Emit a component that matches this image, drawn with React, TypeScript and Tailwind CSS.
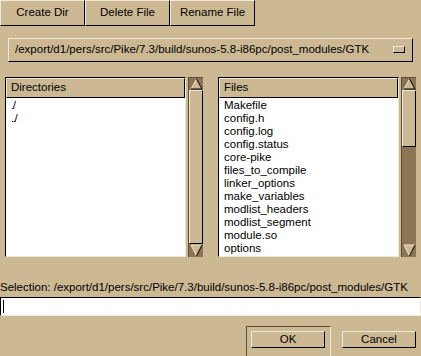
import React from 'react';

const dirs = ['./', '../'];

const files = [
  'Makefile',
  'config.h',
  'config.log',
  'config.status',
  'core-pike',
  'files_to_compile',
  'linker_options',
  'make_variables',
  'modlist_headers',
  'modlist_segment',
  'module.so',
  'options',
];

const path = '/export/d1/pers/src/Pike/7.3/build/sunos-5.8-i86pc/post_modules/GTK';

const ArrowUp = () => (
  <svg width="15" height="12" viewBox="0 0 15 12" className="block">
    <polygon points="7.5,1 2,11 13,11" fill="#ccb994" />
    <line x1="7.5" y1="1" x2="2" y2="11" stroke="#f1e8d6" strokeWidth="1" />
    <line x1="7.5" y1="1" x2="13" y2="11" stroke="#000" strokeWidth="1" />
    <line x1="2" y1="11" x2="13" y2="11" stroke="#000" strokeWidth="1" />
  </svg>
);

const ArrowDown = () => (
  <svg width="15" height="13" viewBox="0 0 15 13" className="block">
    <polygon points="2,1 13,1 7.5,12" fill="#ccb994" />
    <line x1="2" y1="1" x2="13" y2="1" stroke="#f1e8d6" strokeWidth="1" />
    <line x1="2" y1="1" x2="7.5" y2="12" stroke="#f1e8d6" strokeWidth="1" />
    <line x1="13" y1="1" x2="7.5" y2="12" stroke="#000" strokeWidth="1" />
  </svg>
);

const Scrollbar = ({ sliderHeight }: { sliderHeight: number }) => (
  <div className="w-[15px] h-full bg-[#8c7554] border-t border-l border-[#5e4c35] flex flex-col">
    <ArrowUp />
    <div
      className="w-[14px] bg-[#ccb994] border-t border-l border-t-[#f1e8d6] border-l-[#f1e8d6] border-r border-b border-r-black border-b-black"
      style={{ height: sliderHeight }}
    />
    <div className="flex-1" />
    <ArrowDown />
  </div>
);

const ListPane = ({ title, items, leading }: { title: string; items: string[]; leading?: boolean }) => (
  <div className="w-[181px] h-full border-t border-l border-black border-r border-b border-r-[#f1e8d6] border-b-[#f1e8d6] flex flex-col">
    <div className="h-[20px] bg-[#ccb994] border-t border-l border-t-[#f1e8d6] border-l-[#f1e8d6] border-r border-b border-r-black border-b-black flex items-center pl-[4px]">
      {title}
    </div>
    <div className="flex-1 bg-white pl-[5px] pt-[1px]">
      {items.map((item) => (
        <div key={item} className={`h-[13px] leading-[13px] ${leading ? 'tracking-[-1.5px]' : ''}`}>
          {item}
        </div>
      ))}
    </div>
  </div>
);

const ToolButton = ({ label }: { label: string }) => (
  <div className="w-[85px] h-[26px] border-t border-l border-t-[#f1e8d6] border-l-[#f1e8d6] border-r border-b border-r-black border-b-black flex items-center justify-center">
    {label}
  </div>
);

export default function App() {
  return (
    <div
      className="w-[421px] h-[356px] bg-[#ccb994] overflow-hidden text-[11.5px] text-black flex flex-col"
      style={{ fontFamily: '"Liberation Sans", Arial, sans-serif' }}
    >
      <div className="flex">
        <ToolButton label="Create Dir" />
        <ToolButton label="Delete File" />
        <ToolButton label="Rename File" />
      </div>

      <div className="mt-[12px] ml-[8px] w-[405px] h-[24px] border-t border-l border-t-[#f1e8d6] border-l-[#f1e8d6] border-r border-b border-r-black border-b-black flex items-center pl-[6px] pr-[7px]">
        <span className="flex-1 whitespace-nowrap">{path}</span>
        <div className="w-[12px] h-[7px] border-t border-l border-t-[#f1e8d6] border-l-[#f1e8d6] border-r border-b border-r-black border-b-black" />
      </div>

      <div className="mt-[15px] h-[181px] pl-[5px] flex">
        <ListPane title="Directories" items={dirs} leading />
        <div className="ml-[2px]">
          <Scrollbar sliderHeight={154} />
        </div>
        <div className="ml-[15px]">
          <ListPane title="Files" items={files} />
        </div>
        <div className="ml-[2px]">
          <Scrollbar sliderHeight={57} />
        </div>
      </div>

      <div className="mt-[23px] h-[14px] leading-[14px] whitespace-nowrap">Selection: {path}</div>

      <div className="mt-[3px] h-[19px] bg-white border-t border-l border-black border-r border-b border-r-[#f1e8d6] border-b-[#f1e8d6] flex items-center pl-[2px]">
        <div className="w-[1px] h-[13px] bg-black" />
      </div>

      <div className="mt-[10px] flex">
        <div className="ml-[246px] w-[85px] h-[30px] border-t border-l border-[#5e4c35] border-r border-r-[#f1e8d6] p-[4px]">
          <div className="w-[74px] h-[17px] border-t border-l border-t-[#f1e8d6] border-l-[#f1e8d6] border-r border-b border-r-black border-b-black flex items-center justify-center">
            OK
          </div>
        </div>
        <div className="ml-[11px] mt-[5px] w-[74px] h-[17px] border-t border-l border-t-[#f1e8d6] border-l-[#f1e8d6] border-r border-b border-r-black border-b-black flex items-center justify-center">
          Cancel
        </div>
      </div>
    </div>
  );
}
